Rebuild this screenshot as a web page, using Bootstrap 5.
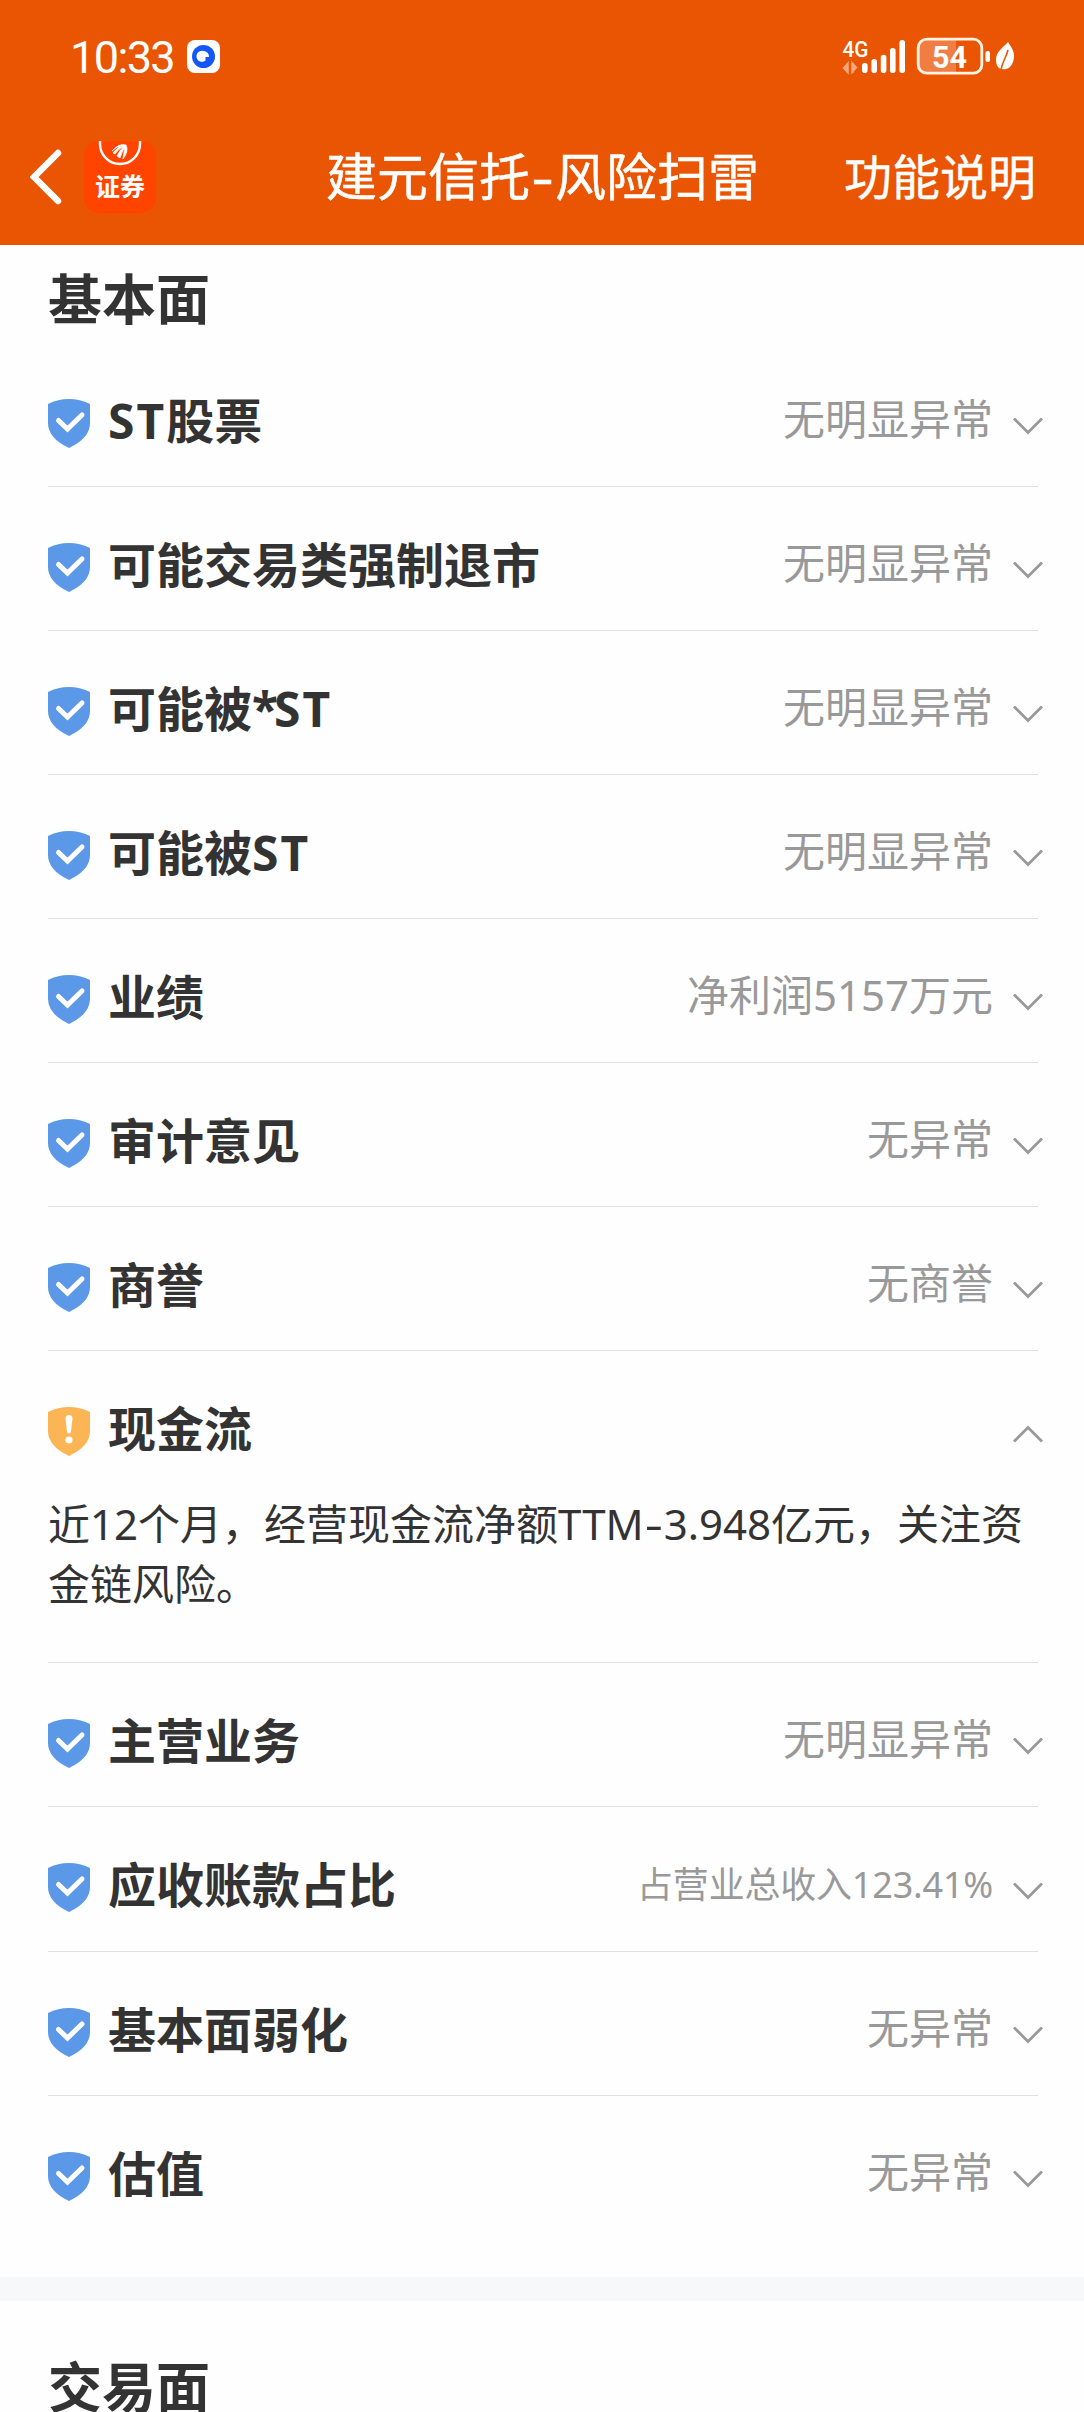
<!DOCTYPE html>
<html lang="zh-CN">
<head>
<meta charset="utf-8">
<meta name="viewport" content="width=device-width, initial-scale=1">
<title>建元信托-风险扫雷</title>
<link href="https://cdn.jsdelivr.net/npm/bootstrap@5.3.0/dist/css/bootstrap.min.css" rel="stylesheet">
<style>
  html, body { height: 2412px; overflow: hidden; }
  body { font-family: "Noto Sans", "Noto Sans CJK SC", sans-serif; color: #333; background: #fefefe; }
  svg { display: block; flex: none; }
  .top-area { background: #e95502; height: 245px; }
  .status-line { height: 112px; padding-left: 70px; padding-right: 68px; }
  .clock { font-family: Roboto, sans-serif; font-size: 45px; letter-spacing: -1.6px; line-height: 50px; margin: 3px 13px 0 0; }
  .title-line { height: 133px; padding: 0 48px 4px 30px; }
  .app-logo { width: 72px; height: 72px; margin-left: 22px; border-radius: 15px; background: #ff4400; font-size: 25px; line-height: 26px; }
  .page-name { font-size: 51px; line-height: 60px; -webkit-text-stroke: .5px #fff; margin: 0 0 2px 170px; }
  .help-link { font-size: 48px; line-height: 60px; -webkit-text-stroke: .4px #fff; }
  .wide-dash { display: inline-block; width: 20px; text-align: center; transform: scaleX(1.35); }
  .page-name .wide-dash { width: 25px; }
  .sheet { padding: 0 46px 0 48px; }
  .group-name { font-size: 54px; line-height: 60px; font-weight: 700; padding: 24px 0 14px; margin: 0; }
  .list-group-flush > .check-item { border: 0; border-bottom: 1px solid #e0e0e2; background: transparent; padding: 0; color: inherit; }
  .check-head { height: 143px; padding-top: 16px; margin-right: -5px; }
  .tall .check-head { height: 144px; }
  .check-name { font-size: 48px; line-height: 60px; font-weight: 700; margin: 0 0 4px 18px; }
  .latin { letter-spacing: 2px; }
  .star { letter-spacing: -4px; }
  .check-value { font-size: 42px; line-height: 60px; color: #999; margin-bottom: 8px; }
  .check-value.compact { font-size: 36px; letter-spacing: -.2px; margin-bottom: 4px; }
  .check-head .arrow { margin: 7px 0 0 20px; }
  .check-note { font-size: 42px; line-height: 60px; height: 168px; margin: 0; white-space: nowrap; }
  .list-group-flush > .check-item.last-item { border-bottom: 0; padding-bottom: 38px; }
  .divider-band { background: #f7f8fa; height: 24px; }
</style>
<script src="https://cdn.jsdelivr.net/npm/bootstrap@5.3.0/dist/js/bootstrap.bundle.min.js"></script>
</head>
<body>
<svg width="0" height="0" class="position-absolute">
  <symbol id="ok" viewBox="0 0 42 50">
    <path d="M0 6Q10 1 21 1T42 6V25Q42 40 21 50Q0 40 0 25Z" fill="#5c98e8"/>
    <path d="M10.500 22.500L19.500 31L34 17" fill="none" stroke="#fff" stroke-width="5" stroke-linecap="round"/>
  </symbol>
  <symbol id="warn" viewBox="0 0 42 50">
    <path d="M0 6Q10 1 21 1T42 6V25Q42 40 21 50Q0 40 0 25Z" fill="#fbb555"/>
    <path d="M17.500 12.500a3.500 3.500 0 0 1 7 0L23 25.500a2 2 0 0 1-4 0Z" fill="#fff"/>
    <circle cx="21" cy="34" r="3.600" fill="#fff"/>
  </symbol>
  <symbol id="down" viewBox="0 0 30 18"><path d="M1 1.500L15 15.500L29 1.500" fill="none" stroke="#999" stroke-width="2.800"/></symbol>
  <symbol id="up" viewBox="0 0 30 18"><path d="M1 16.500L15 2.500L29 16.500" fill="none" stroke="#999" stroke-width="2.800"/></symbol>
</svg>

<header class="top-area text-white">
  <div class="status-line d-flex align-items-center">
    <span class="clock">10:33</span>
    <svg width="33" height="33" viewBox="0 0 33 33"><rect width="33" height="33" rx="8" fill="#fff"/><circle cx="16.500" cy="16.500" r="11.500" fill="#1557f5"/><path d="M16.500 11a5.500 5.500 0 0 1 5.500 6h-3.500v3.500a5.500 5.500 0 1 1-2-9.500Z" fill="#fff"/></svg>
    <svg class="ms-auto" width="174" height="40" viewBox="842 35 174 40">
      <text x="842.500" y="55.500" font-family="Roboto" font-weight="500" font-size="22" textLength="26" lengthAdjust="spacingAndGlyphs" fill="#fff">4G</text>
      <path d="M843.500 67l4.500-5v10ZM856.500 66.500l-4.500 5v-10ZM847 62v10M853 62v10" stroke="#f5a67a" fill="#f5a67a" stroke-width="1.500"/>
      <g stroke="#fff" stroke-width="5.600" stroke-linecap="round"><path d="M864.800 64.800v4.400M874.200 60.800v8.400M883.600 56.500v12.700M892.800 49.800v19.400M902.200 41.800v27.400"/></g>
      <path d="M926 39h30v32h-30a7 7 0 0 1-7-7V46a7 7 0 0 1 7-7Z" fill="#f07e43"/>
      <rect x="918.200" y="38.200" width="63.600" height="34" rx="8.500" fill="none" stroke="#fff3e4" stroke-width="2.800"/>
      <text x="932" y="66.500" font-family="Roboto" font-weight="700" font-size="32" textLength="35" lengthAdjust="spacingAndGlyphs" fill="#fff">54</text>
      <rect x="985.500" y="50" width="4.500" height="11" rx="2" fill="#fff"/>
      <path d="M1008 41C1003 47 996 50 996 59C996 65 999 68 1002 68C1009 70 1014 63 1014 55C1014 49 1011 46 1008 41Z" fill="#fff"/>
      <path d="M1008 49C1006 57 1002 61 1001 69" stroke="#e95502" stroke-width="1.600" fill="none"/>
    </svg>
  </div>
  <div class="title-line d-flex align-items-center">
    <svg width="32" height="56" viewBox="0 0 32 56"><path d="M28 4L4 28L28 52" fill="none" stroke="#fff" stroke-width="6.500" stroke-linecap="round"/></svg>
    <div class="app-logo d-flex flex-column align-items-center fw-bold">
      <svg width="44" height="32" viewBox="0 0 44 32"><path d="M2 0v3a20 20 0 0 0 40 0V0" fill="none" stroke="#fff" stroke-width="2.400"/><path d="M14 10Q21 2 28 4Q31 10 25 18Q26 11 27 6Q24 10 22 17L19 15Q22 9 26 5Q20 8 17 13L15 12Q19 7 24 4Q18 6 14 10Z" fill="#fff" stroke="#fff" stroke-width=".8"/></svg>
      <span>证券</span>
    </div>
    <span class="page-name text-nowrap">建元信托<span class="wide-dash">-</span>风险扫雷</span>
    <span class="help-link text-nowrap ms-auto">功能说明</span>
  </div>
</header>

<main>
  <section class="sheet">
    <h2 class="group-name">基本面</h2>
    <div class="list-group list-group-flush">
      <div class="list-group-item check-item"><div class="check-head d-flex align-items-center"><svg width="42" height="50"><use href="#ok"/></svg><span class="check-name"><span class="latin">ST</span>股票</span><span class="check-value ms-auto">无明显异常</span><svg class="arrow" width="30" height="18"><use href="#down"/></svg></div></div>
      <div class="list-group-item check-item"><div class="check-head d-flex align-items-center"><svg width="42" height="50"><use href="#ok"/></svg><span class="check-name">可能交易类强制退市</span><span class="check-value ms-auto">无明显异常</span><svg class="arrow" width="30" height="18"><use href="#down"/></svg></div></div>
      <div class="list-group-item check-item"><div class="check-head d-flex align-items-center"><svg width="42" height="50"><use href="#ok"/></svg><span class="check-name">可能被<span class="star">*</span><span class="latin">ST</span></span><span class="check-value ms-auto">无明显异常</span><svg class="arrow" width="30" height="18"><use href="#down"/></svg></div></div>
      <div class="list-group-item check-item"><div class="check-head d-flex align-items-center"><svg width="42" height="50"><use href="#ok"/></svg><span class="check-name">可能被<span class="latin">ST</span></span><span class="check-value ms-auto">无明显异常</span><svg class="arrow" width="30" height="18"><use href="#down"/></svg></div></div>
      <div class="list-group-item check-item"><div class="check-head d-flex align-items-center"><svg width="42" height="50"><use href="#ok"/></svg><span class="check-name">业绩</span><span class="check-value ms-auto">净利润5157万元</span><svg class="arrow" width="30" height="18"><use href="#down"/></svg></div></div>
      <div class="list-group-item check-item"><div class="check-head d-flex align-items-center"><svg width="42" height="50"><use href="#ok"/></svg><span class="check-name">审计意见</span><span class="check-value ms-auto">无异常</span><svg class="arrow" width="30" height="18"><use href="#down"/></svg></div></div>
      <div class="list-group-item check-item"><div class="check-head d-flex align-items-center"><svg width="42" height="50"><use href="#ok"/></svg><span class="check-name">商誉</span><span class="check-value ms-auto">无商誉</span><svg class="arrow" width="30" height="18"><use href="#down"/></svg></div></div>
      <div class="list-group-item check-item">
        <div class="check-head d-flex align-items-center"><svg width="42" height="50"><use href="#warn"/></svg><span class="check-name">现金流</span><svg class="arrow ms-auto" width="30" height="18"><use href="#up"/></svg></div>
        <p class="check-note">近12个月，经营现金流净额TTM<span class="wide-dash">-</span>3.948亿元，关注资<br>金链风险。</p>
      </div>
      <div class="list-group-item check-item"><div class="check-head d-flex align-items-center"><svg width="42" height="50"><use href="#ok"/></svg><span class="check-name">主营业务</span><span class="check-value ms-auto">无明显异常</span><svg class="arrow" width="30" height="18"><use href="#down"/></svg></div></div>
      <div class="list-group-item check-item tall"><div class="check-head d-flex align-items-center"><svg width="42" height="50"><use href="#ok"/></svg><span class="check-name">应收账款占比</span><span class="check-value compact ms-auto">占营业总收入123.41%</span><svg class="arrow" width="30" height="18"><use href="#down"/></svg></div></div>
      <div class="list-group-item check-item"><div class="check-head d-flex align-items-center"><svg width="42" height="50"><use href="#ok"/></svg><span class="check-name">基本面弱化</span><span class="check-value ms-auto">无异常</span><svg class="arrow" width="30" height="18"><use href="#down"/></svg></div></div>
      <div class="list-group-item check-item last-item"><div class="check-head d-flex align-items-center"><svg width="42" height="50"><use href="#ok"/></svg><span class="check-name">估值</span><span class="check-value ms-auto">无异常</span><svg class="arrow" width="30" height="18"><use href="#down"/></svg></div></div>
    </div>
  </section>
  <div class="divider-band"></div>
  <section class="sheet pt-5">
    <h2 class="group-name pt-2">交易面</h2>
  </section>
</main>
</body>
</html>
